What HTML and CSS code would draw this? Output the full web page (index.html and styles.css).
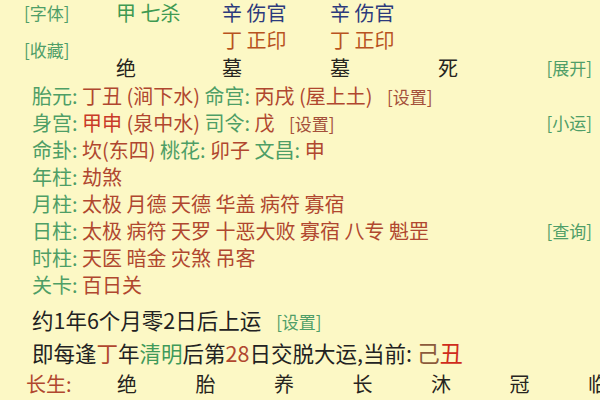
FILE: index.html
```html
<!DOCTYPE html>
<html lang="zh">
<head>
<meta charset="utf-8">
<link rel="stylesheet" href="styles.css">
</head>
<body>
<div class="page">
  <div class="top">
    <span class="btn r1 c0">[字体]</span>
    <span class="green r1 c1">甲 七杀</span>
    <span class="navy r1 c2">辛 伤官</span>
    <span class="navy r1 c3">辛 伤官</span>
    <span class="btn collect">[收藏]</span>
    <span class="orange r2 c2">丁 正印</span>
    <span class="orange r2 c3">丁 正印</span>
    <span class="dark r3 c1">绝</span>
    <span class="dark r3 c2">墓</span>
    <span class="dark r3 c3">墓</span>
    <span class="dark r3 c4">死</span>
    <span class="btn r3 c5">[展开]</span>
  </div>
  <div class="info">
    <div class="line"><span><b>胎元:</b> <i>丁丑 (涧下水)</i> <b>命宫:</b> <i>丙戌 (屋上土)</i> <em>[设置]</em></span></div>
    <div class="line"><span><b>身宫:</b> <i class="red">甲申</i> <i>(泉中水)</i> <b>司令:</b> <i>戊</i> <em>[设置]</em></span><span class="btn">[小运]</span></div>
    <div class="line"><span><b>命卦:</b> <i>坎(东四)</i> <b>桃花:</b> <i>卯子</i> <b>文昌:</b> <i>申</i></span></div>
    <div class="line"><span><b>年柱:</b> <i>劫煞</i></span></div>
    <div class="line"><span><b>月柱:</b> <i>太极 月德 天德 华盖 病符 寡宿</i></span></div>
    <div class="line"><span><b>日柱:</b> <i>太极 病符 天罗 十恶大败 寡宿 八专 魁罡</i></span><span class="btn">[查询]</span></div>
    <div class="line"><span><b>时柱:</b> <i>天医 暗金 灾煞 吊客</i></span></div>
    <div class="line"><span><b>关卡:</b> <i>百日关</i></span></div>
  </div>
  <div class="yun">
    <div class="yline">约1年6个月零2日后上运 <span class="btn small">[设置]</span></div>
    <div class="yline">即每逢<span class="rb">丁</span>年<span class="gr">清明</span>后第<span class="rb">28</span>日交脱大运,当前: <span class="cur"><span class="ji">己</span><span class="chou">丑</span></span></div>
  </div>
  <div class="sheng">
    <span class="slabel">长生:</span>
    <span>绝</span><span>胎</span><span>养</span><span>长</span><span>沐</span><span>冠</span><span>临</span>
  </div>
</div>
</body>
</html>
```

FILE: styles.css
```css
html, body {
  margin: 0;
  padding: 0;
}
body {
  background: #fcf8c5;
  font-family: "Noto Sans CJK SC", "Noto Sans", sans-serif;
  width: 600px;
  height: 400px;
  overflow: hidden;
}
.page {
  width: 600px;
  height: 400px;
  overflow: hidden;
}
.top {
  display: grid;
  grid-template-columns: 92px 106px 108px 108px 1fr;
  grid-template-rows: 26px 28px 28px;
  align-items: center;
  padding-left: 24px;
  padding-right: 8px;
  font-size: 20px;
  line-height: 22px;
}
.r1 { grid-row: 1; }
.r2 { grid-row: 2; }
.r3 { grid-row: 3; }
.c0 { grid-column: 1; }
.c1 { grid-column: 2; }
.c2 { grid-column: 3; }
.c3 { grid-column: 4; }
.c4 { grid-column: 5; }
.c5 { grid-column: 5; justify-self: end; }
.collect {
  grid-column: 1;
  grid-row: 2 / 4;
  align-self: start;
  margin-top: 13px;
}
.btn {
  color: #4f9e68;
  font-size: 17px;
}
.green { color: #3f9a52; }
.navy { color: #2c3a7c; }
.orange { color: #b8531f; }
.dark { color: #262420; }

.info {
  font-size: 20px;
}
.line {
  display: flex;
  justify-content: space-between;
  align-items: center;
  height: 27px;
  line-height: 27px;
  padding-left: 32px;
  padding-right: 8px;
  white-space: nowrap;
}
.line b {
  font-weight: normal;
  color: #4e9e66;
}
.line i {
  font-style: normal;
  color: #b0472f;
}
.line i.red {
  color: #c93a28;
}
.line em {
  font-style: normal;
  color: #a4503a;
  font-size: 17px;
  margin-left: 10px;
}

.yun {
  padding-top: 6px;
  padding-left: 32px;
  font-size: 21.5px;
  color: #222222;
}
.yline {
  height: 32px;
  line-height: 32px;
  white-space: nowrap;
}
.small {
  font-size: 17px;
  margin-left: 10px;
}
.rb { color: #b0472f; }
.gr { color: #3f9a5a; }
.cur { font-size: 23px; }
.ji { color: #8c5b3c; }
.chou { color: #cf2c1c; }

.sheng {
  display: grid;
  grid-template-columns: 91px repeat(7, 78.5px);
  padding-left: 26px;
  height: 32px;
  line-height: 32px;
  font-size: 20px;
  color: #262420;
  white-space: nowrap;
}
.slabel {
  color: #b0472f;
}
```
